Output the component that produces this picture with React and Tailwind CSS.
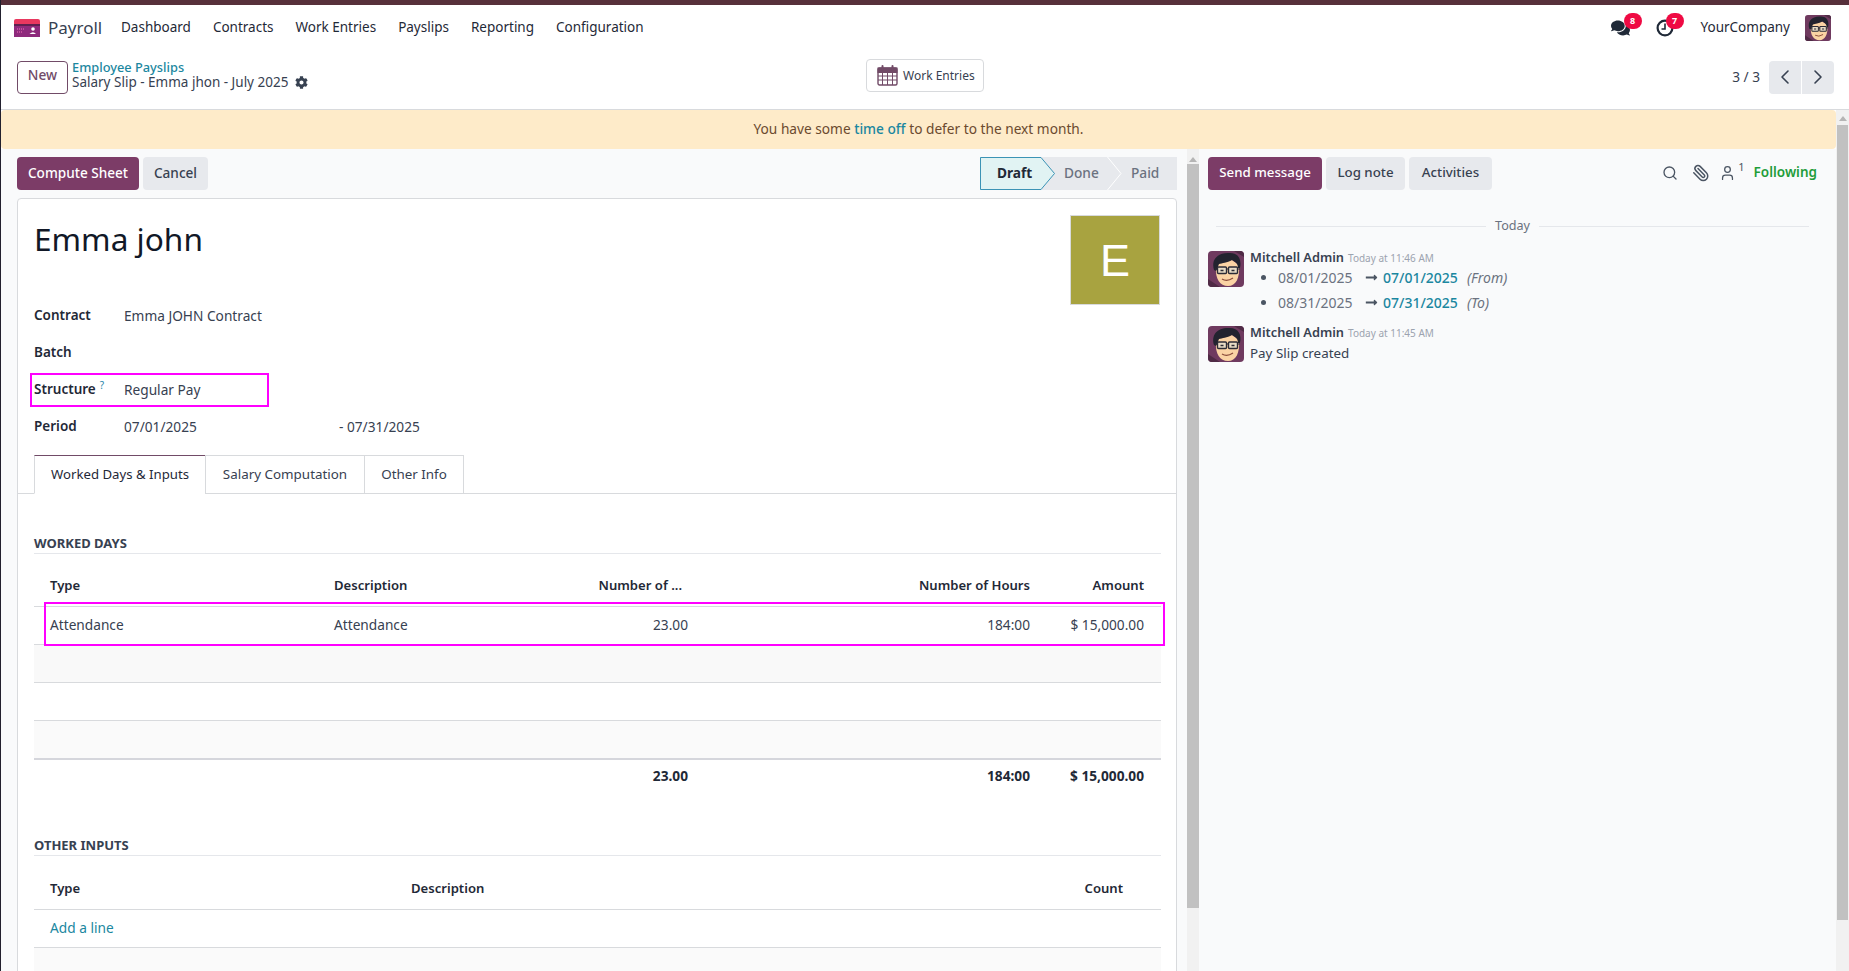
import React from "react";
import { ChevronLeft, ChevronRight, Search, Paperclip, User } from "lucide-react";
import { FaComments, FaCog, FaLongArrowAltRight } from "react-icons/fa";

const NAV = ["Dashboard", "Contracts", "Work Entries", "Payslips", "Reporting", "Configuration"];

function Avatar({ className }) {
  return (
    <svg viewBox="0 0 36 36" className={className}>
      <rect width="36" height="36" rx="4" fill="#6f3a5f" />
      <path d="M0 28 L12 36 H4 Q0 36 0 32Z M36 6 L26 0 H32 Q36 0 36 4Z" fill="#4f2a45" />
      <path d="M8 16 C7 28 12 35 20 35 C28 35 32 27 31 14 L24 9 L12 11 Z" fill="#fbd3a4" />
      <path d="M6 19 C3 9 9 2 20 2 C30 1 34 8 32 17 L30 17 C30 12 27 11 24 9 C19 12 14 12 11 13 C10 15 10 17 8 20 Z" fill="#23232f" />
      <rect x="9.5" y="16" width="9" height="6.5" rx="1" fill="#e9dcc6" stroke="#2b2b36" strokeWidth="1.4" />
      <rect x="20.5" y="16" width="9" height="6.5" rx="1" fill="#e9dcc6" stroke="#2b2b36" strokeWidth="1.4" />
      <path d="M18 18 H21 M10 18 H7 M29 18 H32" stroke="#2b2b36" strokeWidth="1.2" />
      <path d="M12.5 19.5 H15.5 M23.5 19.5 H26.5" stroke="#2b2b36" strokeWidth="1.4" />
      <path d="M14 28 Q19 31 25 27" stroke="#8a4b3a" strokeWidth="1.3" fill="none" />
    </svg>
  );
}

function PayrollLogo() {
  return (
    <svg viewBox="0 0 26 18" className="w-[26px] h-[18px] shrink-0">
      <path d="M0 2 Q0 0 2 0 H24 Q26 0 26 2 V6 H0 Z" fill="#e8385f" />
      <rect y="5" width="26" height="13" fill="#8e2a7c" />
      <rect y="5" width="26" height="2" fill="#5e2050" />
      <circle cx="19" cy="10" r="1.8" fill="#fff" />
      <path d="M15.5 15 Q19 11.5 22 15 Z" fill="#fff" />
      <path d="M3 10 H11 M3 13 H9" stroke="#d45aa5" strokeWidth="1.4" strokeDasharray="1 1" />
    </svg>
  );
}

function CalendarIcon() {
  return (
    <svg viewBox="0 0 21 21" className="w-[21px] h-[21px] shrink-0" fill="none" stroke="#714b67">
      <rect x="1" y="3" width="19" height="17" rx="1.5" strokeWidth="1.4" fill="#fff" />
      <rect x="1" y="3" width="19" height="4.5" fill="#714b67" />
      <path d="M1 11 H20 M1 15 H20 M5.5 8 V20 M10.5 8 V20 M15.5 8 V20" strokeWidth="1" />
      <path d="M5.5 1 V5 M15.5 1 V5" strokeWidth="2" stroke="#714b67" strokeLinecap="round" />
    </svg>
  );
}

function ClockIcon() {
  return (
    <svg viewBox="0 0 18 18" className="w-[18px] h-[18px]" fill="none" stroke="#1f2937">
      <circle cx="9" cy="9" r="7.4" strokeWidth="2.2" />
      <path d="M9 4.5 V10 H5.5" strokeWidth="1.6" />
    </svg>
  );
}

function Field({ label, help, children, box }) {
  return (
    <div className="relative flex items-center h-[37px]">
      <div className="w-[90px] font-semibold text-[13.5px] text-[#1f2937] -mt-[2px]">
        {label}
        {help && <sup className="ml-[4px] text-[10px] font-normal text-[#2a86a8]">?</sup>}
      </div>
      <div className="flex-1 text-[#374151]">{children}</div>
      {box && <div className="absolute left-[-4px] top-[1px] w-[239px] h-[34px] border-2 border-[#ff00ff]" />}
    </div>
  );
}

function Tab({ active, className, children }) {
  return (
    <div
      className={
        "flex items-center justify-center h-[39px] border border-[#d8dadd] -mr-px " +
        (active ? "border-t-[#714b67] border-b-white bg-white text-[#1f2937] " : "text-[#374151] ") +
        className
      }
    >
      {children}
    </div>
  );
}

export default function App() {
  return (
    <div className="h-screen w-screen overflow-hidden flex flex-col bg-white border-l border-[#22202e] text-[13.7px] text-[#374151] font-['Noto_Sans','Open_Sans',sans-serif]">
      <div className="h-[5px] shrink-0 bg-[#57303b] -ml-px" />

      {/* navbar */}
      <div className="h-[41px] shrink-0 flex items-center pt-[4px] pl-[13px] pr-[18px]">
        <PayrollLogo />
        <span className="ml-[8px] text-[17px] text-[#374151] w-[73px]">Payroll</span>
        <div className="flex gap-[22px] text-[#1f2937] text-[13.5px]">
          {NAV.map((n) => (
            <span key={n}>{n}</span>
          ))}
        </div>
        <div className="ml-auto flex items-center">
          <div className="relative mr-[26px]">
            <FaComments className="w-[19px] h-[18px] text-[#1f2937]" />
            <span className="absolute -top-[6px] left-[13px] w-[18px] h-[16px] rounded-full bg-[#ef0a43] text-white text-[9px] font-bold flex items-center justify-center">8</span>
          </div>
          <div className="relative mr-[27px]">
            <ClockIcon />
            <span className="absolute -top-[6px] left-[10px] w-[18px] h-[16px] rounded-full bg-[#ef0a43] text-white text-[9px] font-bold flex items-center justify-center">7</span>
          </div>
          <span className="text-[#1f2937] text-[13.5px] mr-[15px]">YourCompany</span>
          <Avatar className="w-[26px] h-[26px]" />
        </div>
      </div>

      {/* control panel */}
      <div className="h-[64px] shrink-0 border-b border-[#d8dadd] relative flex items-center pl-[16px] pr-[15px] pb-[1px]">
        <button className="w-[51px] h-[33px] pb-[3px] rounded-[4px] border border-[#714b67] text-[#714b67] font-medium">New</button>
        <div className="ml-[4px] leading-[15px] -mt-[4px]">
          <div className="text-[#1b87a0] font-medium text-[12.8px]">Employee Payslips</div>
          <div className="flex items-center text-[13.5px] text-[#374151]">
            Salary Slip - Emma jhon - July 2025
            <FaCog className="ml-[7px] w-[13px] h-[13px] text-[#374151]" />
          </div>
        </div>
        <div className="absolute left-[865px] top-[13px] w-[118px] h-[33px] border border-[#d8dadd] rounded-[4px] flex items-center pl-[10px] gap-[5px] text-[12px] text-[#374151]">
          <CalendarIcon />
          <span className="pt-[1px]">Work Entries</span>
        </div>
        <div className="ml-auto flex items-center">
          <span className="mr-[9px] text-[#374151]">3 / 3</span>
          <div className="flex gap-px">
            <div className="w-[32px] h-[33px] bg-[#e7e9ed] rounded-l-[4px] flex items-center justify-center">
              <ChevronLeft className="w-[24px] h-[24px] text-[#374151]" strokeWidth={1.6} />
            </div>
            <div className="w-[32px] h-[33px] bg-[#e7e9ed] rounded-r-[4px] flex items-center justify-center">
              <ChevronRight className="w-[24px] h-[24px] text-[#374151]" strokeWidth={1.6} />
            </div>
          </div>
        </div>
      </div>

      <div className="flex-1 min-h-0 flex">
        <div className="flex-1 min-w-0 flex flex-col">
          <div className="h-[39px] shrink-0 pb-[1px] bg-[#feebc9] rounded-[4px] flex items-center justify-center text-[#6b4a2f]">
            <span>
              You have some <span className="text-[#1b87a0] font-medium">time off</span> to defer to the next month.
            </span>
          </div>

          <div className="flex-1 min-h-0 flex bg-[#f9fafb]">
            {/* form */}
            <div className="w-[1186px] shrink-0 pl-[16px] pr-[10px] pt-[8px] overflow-hidden">
              <div className="flex items-center h-[33px]">
                <button className="w-[122px] h-[33px] pb-[1px] rounded-[4px] bg-[#7c3c67] text-white text-[13.6px] font-medium">Compute Sheet</button>
                <button className="ml-[4px] w-[65px] h-[33px] pb-[1px] rounded-[4px] bg-[#e7e9ed] text-[#374151] text-[13.6px] font-medium">Cancel</button>

                <div className="ml-auto flex h-[33px] bg-[#e7e9ed] text-[#6b7280] font-medium">
                  <div className="relative w-[75px] flex items-center pb-[1px] pl-[17px] font-bold text-[#1f2937]">
                    <svg viewBox="0 0 75 33" className="absolute inset-0 w-[75px] h-[33px]">
                      <path d="M0.5 0.5 H61 L74.5 16.5 L61 32.5 H0.5 Z" fill="#e1f3f3" stroke="#3b93b5" />
                    </svg>
                    <span className="relative">Draft</span>
                  </div>
                  <div className="relative w-[67px] flex items-center pb-[1px] pl-[9px]">
                    Done
                    <svg viewBox="0 0 15 33" className="absolute right-0 top-0 w-[15px] h-[33px]">
                      <path d="M0.5 0 L14 16.5 L0.5 33" fill="none" stroke="#fff" />
                    </svg>
                  </div>
                  <div className="w-[55px] flex items-center pb-[1px] pl-[9px]">Paid</div>
                </div>
              </div>

              <div className="mt-[8px] h-[900px] bg-white border border-[#d8dadd] rounded-t-[4px]">
                <div className="relative pt-[13px] px-[16px]">
                  <div className="absolute right-[16px] top-[16px] w-[90px] h-[90px] pt-[1px] bg-[#a8a340] border border-[#d8dadd] flex items-center justify-center text-white text-[45px] font-['Liberation_Sans',sans-serif]">
                    E
                  </div>
                  <div className="h-[84px] text-[31.6px] leading-[54px] text-[#111827]">Emma john</div>
                  <div className="pt-[2px]">
                    <Field label="Contract">Emma JOHN Contract</Field>
                    <Field label="Batch" />
                    <Field label="Structure" help box>
                      Regular Pay
                    </Field>
                    <Field label="Period">
                      <div className="flex">
                        <span className="w-[215px]">07/01/2025</span>
                        <span>- 07/31/2025</span>
                      </div>
                    </Field>
                  </div>
                </div>

                {/* tabs */}
                <div className="mt-[9px] pl-[16px] flex border-b border-[#d8dadd] h-[39px]">
                  <Tab active className="w-[172px] text-[13.2px]">Worked Days &amp; Inputs</Tab>
                  <Tab className="w-[160px] text-[13.4px]">Salary Computation</Tab>
                  <Tab className="w-[100px] text-[13.4px]">Other Info</Tab>
                </div>

                <div className="px-[16px] w-[1159px]">
                  <div className="mt-[41px] h-[18px] border-b border-[#e5e7eb] text-[13px] font-bold text-[#374151] leading-[16px] box-content">WORKED DAYS</div>

                  <div className="relative mt-[13px]">
                    <table className="w-[1127px] table-fixed border-collapse">
                      <colgroup>
                        <col className="w-[284px]" />
                        <col className="w-[272px]" />
                        <col className="w-[113px]" />
                        <col className="w-[343px]" />
                        <col className="w-[115px]" />
                      </colgroup>
                      <thead>
                        <tr className="h-[39px] border-b border-[#d8dadd] text-[#1f2937] text-[13.1px] font-semibold">
                          <td className="pl-[16px]">Type</td>
                          <td className="pl-[16px]">Description</td>
                          <td className="pr-[21px] text-right whitespace-nowrap">Number of ...</td>
                          <td className="pr-[16px] text-right">Number of Hours</td>
                          <td className="pr-[17px] text-right">Amount</td>
                        </tr>
                      </thead>
                      <tbody>
                        <tr className="h-[38px] border-b border-[#d8dadd]">
                          <td className="pl-[16px]">Attendance</td>
                          <td className="pl-[16px]">Attendance</td>
                          <td className="pr-[15px] text-right">23.00</td>
                          <td className="pr-[16px] text-right">184:00</td>
                          <td className="pr-[17px] text-right">$ 15,000.00</td>
                        </tr>
                        <tr className="h-[38px] border-b border-[#d8dadd] bg-[#f9f9f9]"><td colSpan="5" /></tr>
                        <tr className="h-[38px] border-b border-[#d8dadd]"><td colSpan="5" /></tr>
                        <tr className="h-[39px] border-b-2 border-[#d5d6dc] bg-[#fafafa]"><td colSpan="5" /></tr>
                      </tbody>
                      <tfoot>
                        <tr className="h-[34px] font-bold text-[#1f2937]">
                          <td />
                          <td />
                          <td className="pr-[15px] text-right">23.00</td>
                          <td className="pr-[16px] text-right">184:00</td>
                          <td className="pr-[17px] text-right">$ 15,000.00</td>
                        </tr>
                      </tfoot>
                    </table>
                    <div className="absolute left-[10px] top-[35px] w-[1121px] h-[44px] border-2 border-[#ff00ff]" />
                  </div>

                  <div className="mt-[44px] h-[18px] border-b border-[#e5e7eb] text-[13px] font-bold text-[#374151] leading-[16px] box-content">OTHER INPUTS</div>

                  <table className="mt-[14px] w-[1127px] table-fixed border-collapse">
                    <colgroup>
                      <col className="w-[361px]" />
                      <col className="w-[604px]" />
                      <col className="w-[140px]" />
                      <col className="w-[22px]" />
                    </colgroup>
                    <thead>
                      <tr className="h-[39px] border-b border-[#d8dadd] text-[#1f2937] text-[13.1px] font-semibold">
                        <td className="pl-[16px]">Type</td>
                        <td className="pl-[16px]">Description</td>
                        <td className="pr-[16px] text-right">Count</td>
                        <td />
                      </tr>
                    </thead>
                    <tbody>
                      <tr className="h-[38px] border-b border-[#d8dadd]">
                        <td className="pl-[16px] text-[#1b87a0]" colSpan="4">Add a line</td>
                      </tr>
                      <tr className="h-[38px] bg-[#fafafa]"><td colSpan="4" /></tr>
                    </tbody>
                  </table>
                </div>
              </div>
            </div>

            {/* inner scrollbar */}
            <div className="w-[12px] shrink-0 bg-[#f1f1f1] flex flex-col items-center">
              <div className="h-[15px] flex items-center justify-center pt-[6px]">
                <div className="border-x-[4px] border-x-transparent border-b-[5px] border-b-[#b5b5b5]" />
              </div>
              <div className="w-full h-[744px] bg-[#c1c1c1]" />
            </div>

            {/* chatter */}
            <div className="flex-1 min-w-0 pl-[9px] pr-[19px] pt-[8px]">
              <div className="flex items-center h-[33px]">
                <button className="w-[114px] h-[33px] pb-[1px] rounded-[4px] bg-[#7c3c67] text-white text-[13.3px] font-medium">Send message</button>
                <button className="ml-[4px] w-[79px] h-[33px] pb-[1px] rounded-[4px] bg-[#e7e9ed] text-[#374151] text-[13.3px] font-medium">Log note</button>
                <button className="ml-[4px] w-[83px] h-[33px] pb-[1px] rounded-[4px] bg-[#e7e9ed] text-[#374151] text-[13.3px] font-medium">Activities</button>
                <div className="ml-auto flex items-center text-[#4b5563]">
                  <Search className="w-[16px] h-[16px] -mt-[2px]" strokeWidth={2} />
                  <Paperclip className="ml-[14px] w-[18px] h-[18px] -mt-[2px] -scale-x-100" strokeWidth={2} />
                  <User className="ml-[9px] w-[17px] h-[18px] -mt-[2px]" strokeWidth={1.8} />
                  <sup className="ml-[2px] -mt-[2px] text-[11px]">1</sup>
                  <span className="ml-[9px] pb-[2px] text-[#1f9d3a] text-[13.5px] font-semibold">Following</span>
                </div>
              </div>

              <div className="mt-[27px] flex items-center gap-[9px] pl-[8px] pr-[8px] text-[12.6px] text-[#6b7280]">
                <div className="flex-1 border-t border-[#e5e7eb]" />
                Today
                <div className="flex-1 border-t border-[#e5e7eb]" />
              </div>

              <div className="mt-[15px] flex gap-[6px]">
                <Avatar className="w-[36px] h-[36px] shrink-0" />
                <div>
                  <div className="flex items-baseline leading-[13px]">
                    <span className="font-semibold text-[#374151] text-[12.8px]">Mitchell Admin</span>
                    <span className="ml-[4px] text-[10px] text-[#9ca3af]">Today at 11:46 AM</span>
                  </div>
                  <ul className="pl-[28px] list-disc text-[14px] text-[#6b7280] leading-[25px] marker:text-[#4b5563]">
                    <li>
                      <div className="flex items-center">
                        <span className="w-[86px]">08/01/2025</span>
                        <FaLongArrowAltRight className="w-[15px] h-[13px] text-[#4b5563]" />
                        <span className="ml-[4px] w-[84px] text-[#1b87a0] font-medium">07/01/2025</span>
                        <span className="italic">(From)</span>
                      </div>
                    </li>
                    <li>
                      <div className="flex items-center">
                        <span className="w-[86px]">08/31/2025</span>
                        <FaLongArrowAltRight className="w-[15px] h-[13px] text-[#4b5563]" />
                        <span className="ml-[4px] w-[84px] text-[#1b87a0] font-medium">07/31/2025</span>
                        <span className="italic">(To)</span>
                      </div>
                    </li>
                  </ul>
                </div>
              </div>

              <div className="mt-[11px] flex gap-[6px]">
                <Avatar className="w-[36px] h-[36px] shrink-0" />
                <div>
                  <div className="flex items-baseline leading-[13px]">
                    <span className="font-semibold text-[#374151] text-[12.8px]">Mitchell Admin</span>
                    <span className="ml-[4px] text-[10px] text-[#9ca3af]">Today at 11:45 AM</span>
                  </div>
                  <div className="mt-[3px] text-[13.4px] text-[#374151]">Pay Slip created</div>
                </div>
              </div>
            </div>
          </div>
        </div>

        {/* page scrollbar */}
        <div className="w-[13px] shrink-0 bg-[#f1f1f1] flex flex-col items-center">
          <div className="h-[15px] flex items-center justify-center pt-[2px]">
            <div className="border-x-[4px] border-x-transparent border-b-[5px] border-b-[#b5b5b5]" />
          </div>
          <div className="w-[11px] h-[795px] bg-[#c1c1c1]" />
        </div>
      </div>
    </div>
  );
}
